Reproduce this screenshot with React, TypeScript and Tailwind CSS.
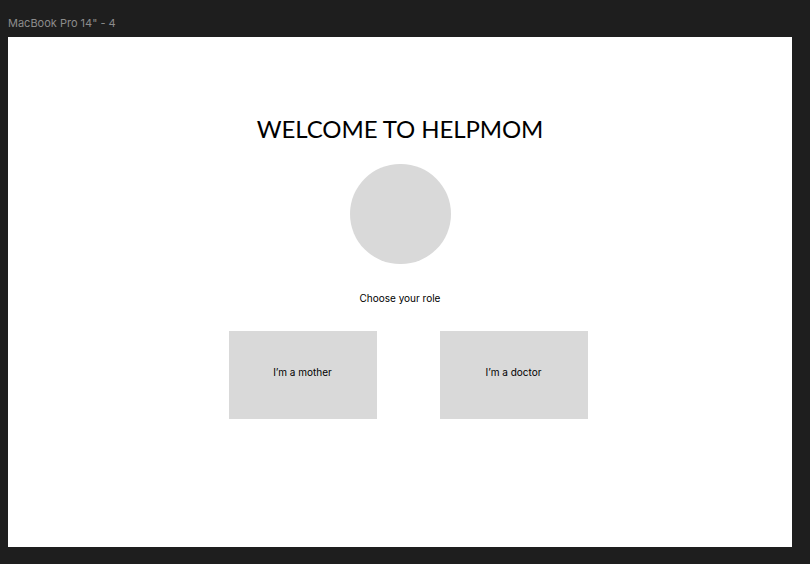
export default function App() {
  return (
    <div className="h-[564px] w-[810px] bg-[#1e1e1e] font-['Inter',sans-serif] overflow-hidden">
      <div className="h-[37px] pl-2 pt-[16px] text-[11px] leading-[14px] text-[#8c8c8c]">
        MacBook Pro 14" - 4
      </div>
      <div className="ml-2 h-[510px] w-[784px] bg-white flex flex-col items-center pt-[77px]">
        <h1 className="text-[24px] leading-[30px] text-black font-['Lato',sans-serif] tracking-[-0.1px]">
          WELCOME TO HELPMOM
        </h1>
        <div className="mt-[20px] h-[100px] w-[101px] rounded-full bg-[#d9d9d9]" />
        <p className="mt-[27px] text-[10px] leading-[14px] text-black">Choose your role</p>
        <div className="mt-[26px] ml-4 flex gap-[63px]">
          <button className="h-[88px] w-[148px] bg-[#d9d9d9] pb-[5px] text-[10px] text-black">I’m a mother</button>
          <button className="h-[88px] w-[148px] bg-[#d9d9d9] pb-[5px] text-[10px] text-black">I’m a doctor</button>
        </div>
      </div>
    </div>
  );
}
